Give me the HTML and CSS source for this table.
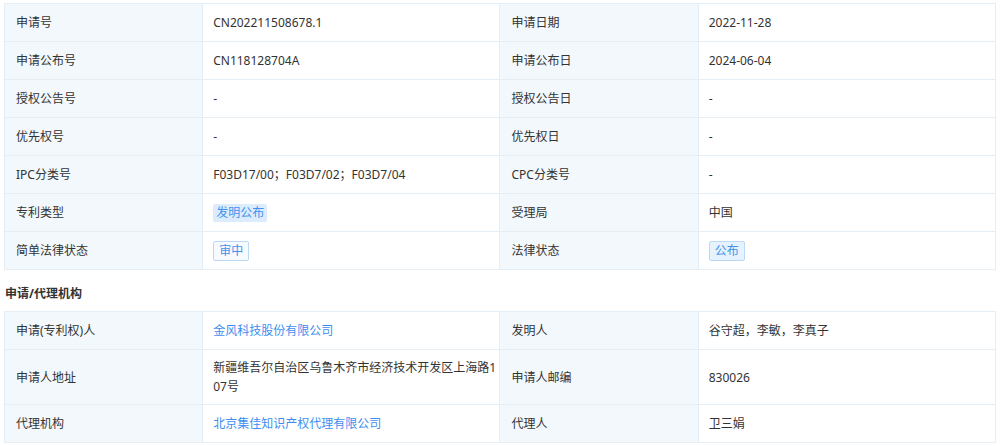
FILE: index.html
```html
<!DOCTYPE html>
<html lang="zh">
<head>
<meta charset="utf-8">
<title>专利信息</title>
<link rel="stylesheet" href="styles.css">
</head>
<body>
<table class="info">
  <colgroup><col class="c-label"><col class="c-value"><col class="c-label"><col class="c-value"></colgroup>
  <tr><td class="lb">申请号</td><td>CN202211508678.1</td><td class="lb">申请日期</td><td>2022-11-28</td></tr>
  <tr><td class="lb">申请公布号</td><td>CN118128704A</td><td class="lb">申请公布日</td><td>2024-06-04</td></tr>
  <tr><td class="lb">授权公告号</td><td>-</td><td class="lb">授权公告日</td><td>-</td></tr>
  <tr><td class="lb">优先权号</td><td>-</td><td class="lb">优先权日</td><td>-</td></tr>
  <tr><td class="lb">IPC分类号</td><td>F03D17/00；F03D7/02；F03D7/04</td><td class="lb">CPC分类号</td><td>-</td></tr>
  <tr><td class="lb">专利类型</td><td><span class="tag tag-fill">发明公布</span></td><td class="lb">受理局</td><td>中国</td></tr>
  <tr><td class="lb">简单法律状态</td><td><span class="tag tag-line">审中</span></td><td class="lb">法律状态</td><td><span class="tag tag-both">公布</span></td></tr>
</table>
<div class="section-title">申请/代理机构</div>
<table class="info">
  <colgroup><col class="c-label"><col class="c-value"><col class="c-label"><col class="c-value"></colgroup>
  <tr><td class="lb">申请(专利权)人</td><td><a class="link" href="#">金风科技股份有限公司</a></td><td class="lb">发明人</td><td>谷守超，李敏，李真子</td></tr>
  <tr><td class="lb">申请人地址</td><td class="addr">新疆维吾尔自治区乌鲁木齐市经济技术开发区上海路107号</td><td class="lb">申请人邮编</td><td>830026</td></tr>
  <tr><td class="lb">代理机构</td><td><a class="link" href="#">北京集佳知识产权代理有限公司</a></td><td class="lb">代理人</td><td>卫三娟</td></tr>
</table>
</body>
</html>
```

FILE: styles.css
```css
html, body {
  margin: 0;
  background: #ffffff;
}
body {
  padding: 3px 4px 0 4px;
  font-family: "Noto Sans", "Noto Sans CJK SC", sans-serif;
  font-size: 12px;
  color: #333333;
}
.info {
  width: 992px;
  border-collapse: collapse;
  table-layout: fixed;
}
.c-label { width: 20%; }
.c-value { width: 30%; }
.info td {
  border: 1px solid #e6eef5;
  padding: 0 10px;
  height: 38px;
  box-sizing: border-box;
  line-height: 19px;
  vertical-align: middle;
  word-break: break-all;
}
.info td.lb {
  background: #f2f8fc;
  padding-left: 11px;
  color: #333333;
}
.info td.addr {
  padding: 8px 2px 8px 10px;
}
.section-title {
  font-weight: bold;
  color: #333333;
  line-height: 20px;
  margin: 14px 0 7px 1px;
}
.link {
  color: #3d8ef0;
  text-decoration: none;
}
.tag {
  display: inline-block;
  height: 18px;
  line-height: 18px;
  padding: 0 3px;
  border-radius: 2px;
  color: #3f93ee;
  vertical-align: middle;
}
.tag-fill {
  background: #dcecfc;
}
.tag-line {
  background: #f7fbff;
  border: 1px solid #b9d9f7;
  padding: 0 5px;
}
.tag-both {
  background: #e6f2fd;
  border: 1px solid #b9d9f7;
  padding: 0 5px;
}
```
